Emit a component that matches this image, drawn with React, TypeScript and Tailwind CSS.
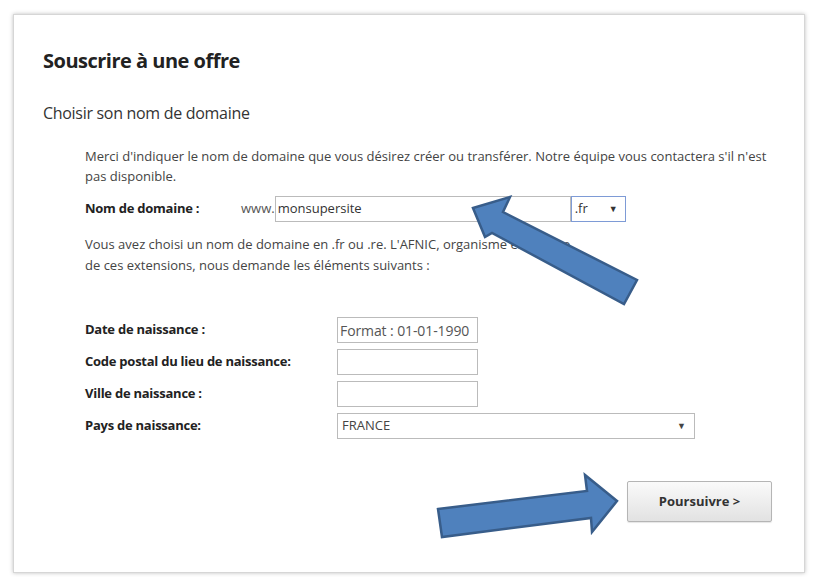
import React from 'react';

const font = { fontFamily: '"Open Sans", "Noto Sans", sans-serif' };

function Row({ label, children }: { label: string; children: React.ReactNode }) {
  return (
    <div className="flex items-center h-[32px]">
      <div className="w-[252px] font-bold text-[13px] text-[#222] tracking-[-0.25px]">{label}</div>
      {children}
    </div>
  );
}

export default function App() {
  return (
    <div className="w-[814px] h-[577px] bg-white overflow-hidden pt-[14px] pl-[13px]" style={font}>
      <div className="relative w-[792px] h-[559px] border border-[#d6d6d6] shadow-[0_0_4px_rgba(0,0,0,0.25)] bg-white pl-[29px] pt-[32px]">
        <h1 className="text-[20px] font-bold text-[#222] leading-[28px] tracking-[-0.5px]">Souscrire à une offre</h1>
        <h2 className="mt-[26px] text-[16px] text-[#333] leading-[24px] tracking-[-0.3px]">Choisir son nom de domaine</h2>

        <div className="pl-[42px] mt-[21px] text-[13px] text-[#444]">
          <p className="leading-[20px] w-[682px]">
            Merci d'indiquer le nom de domaine que vous désirez créer ou transférer. Notre équipe vous contactera s'il n'est pas disponible.
          </p>

          <div className="flex items-center mt-[10px] h-[26px]">
            <div className="w-[156px] font-bold text-[#222] tracking-[-0.25px]">Nom de domaine :</div>
            <span className="text-[#555]">www.</span>
            <div className="w-[296px] h-[26px] border border-[#bbb] flex items-center pl-[2px] text-[#333]">monsupersite</div>
            <div className="w-[55px] h-[26px] border border-[#7e9bd6] flex items-center justify-between px-[3px] text-[#333]">
              <span>.fr</span>
              <span className="text-[9px] mr-[4px]">▼</span>
            </div>
          </div>

          <p className="leading-[21px] mt-[12px]">
            Vous avez choisi un nom de domaine en .fr ou .re. L'AFNIC, organisme en charge
            <br />
            de ces extensions, nous demande les éléments suivants :
          </p>

          <div className="mt-[38px] flex flex-col">
            <Row label="Date de naissance :">
              <div className="w-[141px] h-[26px] border border-[#bbb] flex items-center pl-[2px] text-[14px] tracking-[-0.1px] text-[#555] whitespace-nowrap overflow-hidden">Format : 01-01-1990</div>
            </Row>
            <Row label="Code postal du lieu de naissance:">
              <div className="w-[141px] h-[26px] border border-[#bbb]" />
            </Row>
            <Row label="Ville de naissance :">
              <div className="w-[141px] h-[26px] border border-[#bbb]" />
            </Row>
            <Row label="Pays de naissance:">
              <div className="w-[358px] h-[26px] border border-[#bbb] flex items-center justify-between pl-[4px] pr-[8px] text-[#444]">
                <span>FRANCE</span>
                <span className="text-[9px]">▼</span>
              </div>
            </Row>
          </div>

          <div className="flex justify-end mt-[39px] pr-[32px]">
            <button className="w-[145px] h-[41px] border border-[#b5b5b5] rounded-[2px] bg-gradient-to-b from-[#fafafa] to-[#e2e2e2] font-bold text-[13px] text-[#333] shadow-[0_1px_1px_rgba(0,0,0,0.1)]">
              Poursuivre &gt;
            </button>
          </div>
        </div>

        <svg className="absolute left-[-14px] top-[-15px] pointer-events-none" width="814" height="577">
          <polygon
            points="473,208 510,197 503,212 637,280 624,304 492,233 485,237"
            fill="#4f81bd"
            stroke="#385d8a"
            strokeWidth="2.5"
            strokeLinejoin="miter"
          />
          <polygon
            points="438,509 587,491 585,475 617,501 592,532 591,518 442,537"
            fill="#4f81bd"
            stroke="#385d8a"
            strokeWidth="2.5"
            strokeLinejoin="miter"
          />
        </svg>
      </div>
    </div>
  );
}
